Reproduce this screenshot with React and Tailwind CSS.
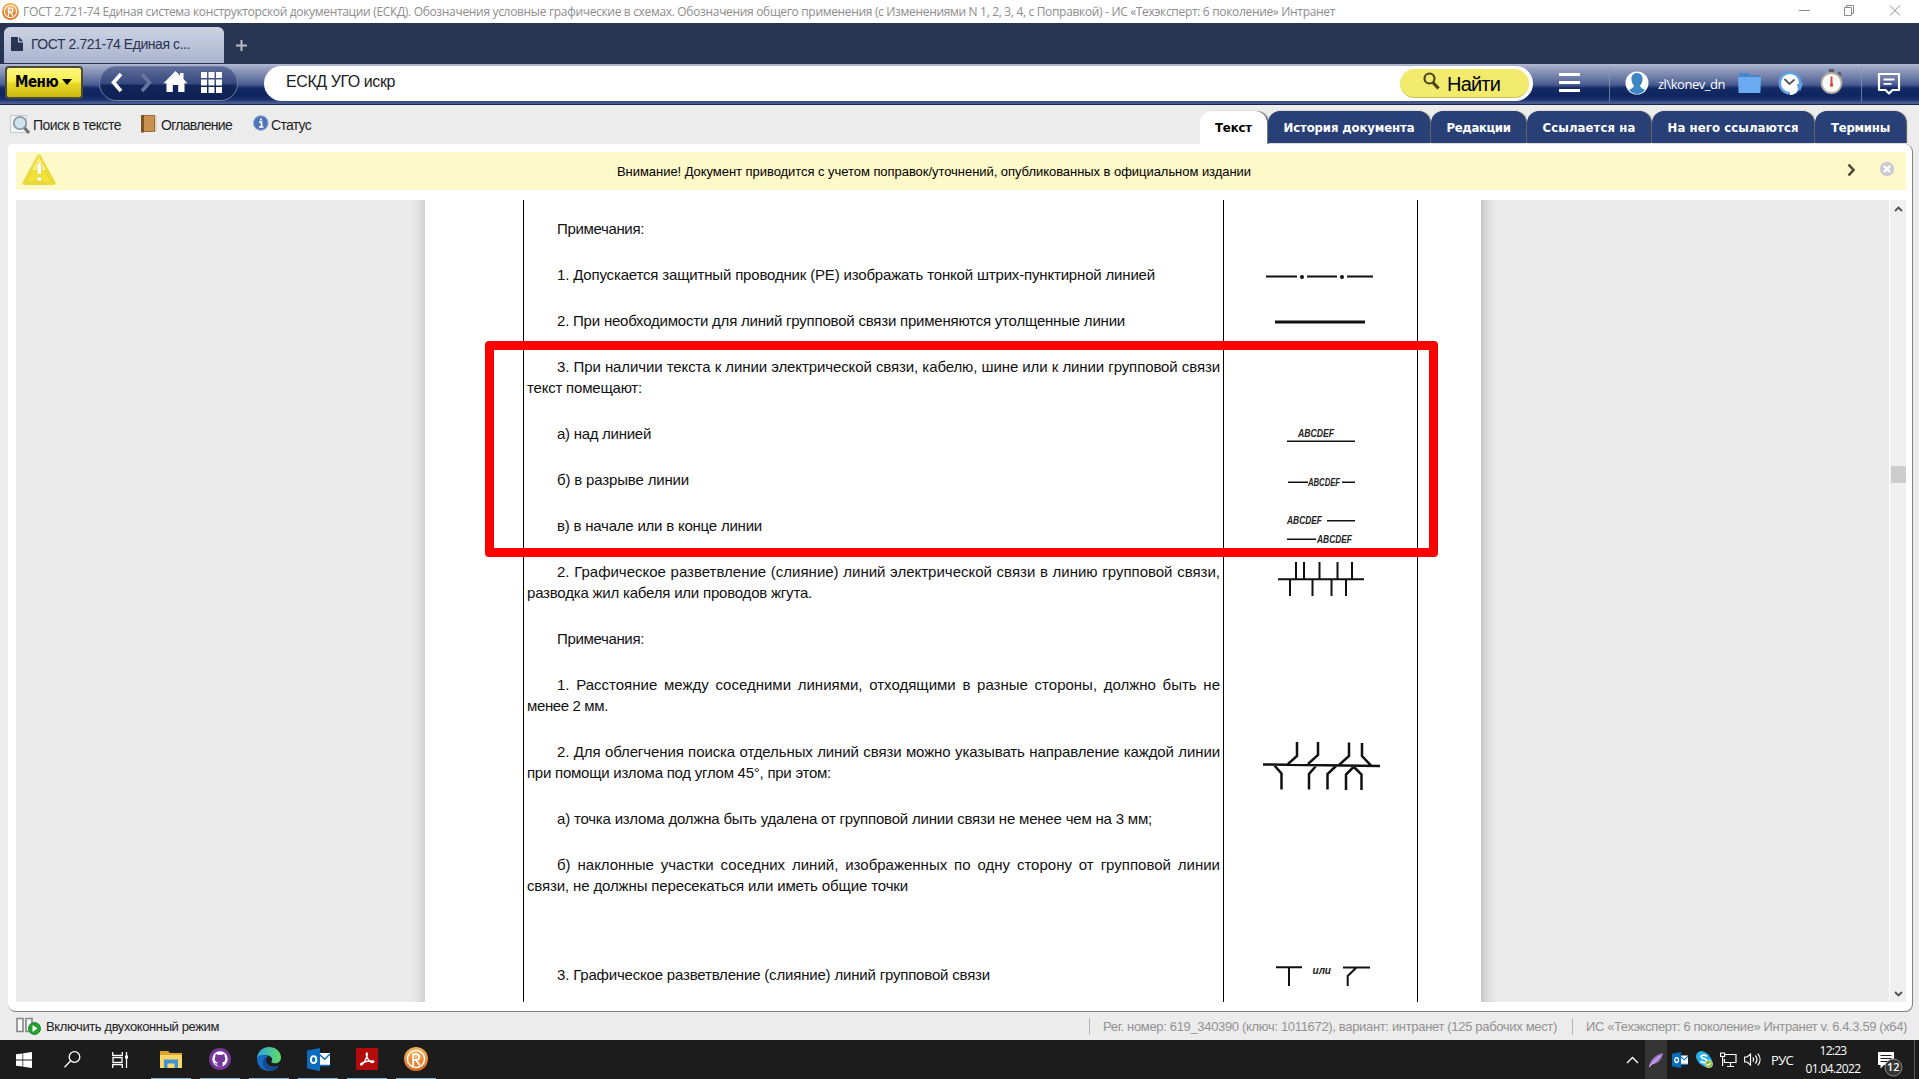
import { useLayoutEffect, useRef, useState } from "react";

const ARIAL = "font-['Liberation_Sans',Arial,sans-serif]";
const SEGOE = "font-['Open_Sans','Noto_Sans',sans-serif]";

// Single line of text whose tracking is adjusted so that it fills the given width.
function Fit({ w, children, className = "" }) {
  const ref = useRef(null);
  const [ls, setLs] = useState(0);
  useLayoutEffect(() => {
    const measure = () => {
      const el = ref.current;
      if (!el) return;
      el.style.letterSpacing = "0px";
      const n = el.getBoundingClientRect().width;
      const v = (w - n) / children.length;
      el.style.letterSpacing = v + "px";
      setLs(v);
    };
    measure();
    if (document.fonts) document.fonts.ready.then(measure);
  }, [w, children]);
  return (
    <span ref={ref} className={"inline-block shrink-0 whitespace-nowrap indent-0 " + className} style={{ letterSpacing: ls + "px" }}>
      {children}
    </span>
  );
}

function TechLogo({ size }) {
  return (
    <svg width={size} height={size} viewBox="0 0 24 24" className="shrink-0">
      <defs>
        <linearGradient id="tl" x1="0" y1="0" x2="0" y2="1">
          <stop offset="0" stopColor="#f6b45a" />
          <stop offset="1" stopColor="#dd6a1c" />
        </linearGradient>
      </defs>
      <circle cx="12" cy="12" r="12" fill="url(#tl)" />
      <circle cx="12" cy="12" r="8.6" fill="none" stroke="#fff" strokeWidth="1.5" />
      <path d="M9.2 19V7.2h3.2a2.9 2.9 0 0 1 0 5.8H9.2M12.2 13l3.4 5.2M12 9.5v1.2" fill="none" stroke="#fff" strokeWidth="1.9" />
    </svg>
  );
}

function OutlookIcon({ w, h }) {
  return (
    <svg width={w} height={h} viewBox="0 0 23 23" className="shrink-0">
      <path d="M12 5h11v13H12z" fill="#fff" />
      <path d="M12.5 6.5l5.2 4.8L23 6M13 17.5h10" fill="none" stroke="#0a6cbd" strokeWidth="1.5" />
      <path d="M0 2.5L13 0v23L0 20.500z" fill="#0a6cbd" />
      <ellipse cx="6.600" cy="11.600" rx="2.700" ry="3.500" fill="none" stroke="#fff" strokeWidth="1.900" />
    </svg>
  );
}

function TitleBar() {
  return (
    <div className="flex h-[23px] items-center bg-white pl-[2px]">
      <div className="-mt-px flex"><TechLogo size={17} /></div>
      <Fit w={1312} className={"ml-[4px] text-[12px] leading-4 text-[#8d8d8d] " + SEGOE}>
        ГОСТ 2.721-74 Единая система конструкторской документации (ЕСКД). Обозначения условные графические в схемах. Обозначения общего применения (с Изменениями N 1, 2, 3, 4, с Поправкой) - ИС «Техэксперт: 6 поколение» Интранет
      </Fit>
      <svg width="110" height="22" viewBox="1795 0 110 22" className="-mt-px ml-auto mr-[14px]" fill="none" stroke="#8a8a8a">
        <path d="M1799 10.500h11M1844.500 7.500h7v8h-7zM1846.500 7.500v-2h7v8h-2M1890 5.500l10 10M1900 5.500l-10 10" />
      </svg>
    </div>
  );
}

function TabStrip() {
  return (
    <div className="flex h-[41px] bg-[#273452] pl-1 pt-1">
      <div className="flex h-9 w-[220px] items-center rounded-t-md bg-linear-to-b from-[#cdd3e2] to-[#a9b4cf] pb-[2px] pl-[7px]">
        <svg width="12" height="14" viewBox="0 0 12 14"><path d="M0 0h7v5.500h5V14H0zM8.200 0L12 4.300H8.200z" fill="#273452" /></svg>
        <Fit w={159} className={"ml-[8px] text-[14px] leading-5 text-[#2a3350] " + ARIAL}>ГОСТ 2.721-74 Единая с...</Fit>
      </div>
      <svg width="11" height="11" viewBox="0 0 11 11" className="ml-[12px] mt-[13px]"><path d="M5.500 0v11M0 5.500h11" stroke="#b9bdc9" strokeWidth="2" /></svg>
    </div>
  );
}

function Toolbar() {
  return (
    <div className="flex h-[41px] items-start border-b border-[#1a2547] bg-[linear-gradient(to_bottom,#b3bbd2_0,#9ea8c6_3px,#5d6d9c_17px,#465891_21px,#152b65_24px,#0f2560_31px,#1b3270_36px,#41548a_38px,#4d5f92_40px)] pt-[2px]">
      <div className="ml-[5px] flex h-[33px] w-[78px] items-center rounded-[4px] border-2 border-[#4d4a36] bg-[linear-gradient(to_bottom,#fbf685_0,#f6ee4c_45%,#e6d727_55%,#cdb90f_100%)] pl-[8px] pb-[2px]">
        <Fit w={43} className="font-['DejaVu_Sans_Condensed','DejaVu_Sans','Open_Sans',sans-serif] text-[15px] font-bold leading-5 text-black">Меню</Fit>
        <svg width="10" height="6" viewBox="0 0 10 6" className="ml-[4px] mt-px"><path d="M0 0h10L5 6z" /></svg>
      </div>
      <div className="ml-[16px] flex h-[35px] w-[139px] items-center rounded-full border border-[#6f7da8] bg-[linear-gradient(to_bottom,#5e6c97_0,#364a80_50%,#12265b_56%,#0e2053_100%)]">
        <svg width="137" height="33" viewBox="100 67 137 33">
          <path d="M121 74l-7.500 8.500 7.500 8.500" fill="none" stroke="#fff" strokeWidth="3.600" />
          <path d="M142 74l7.500 8.500-7.500 8.500" fill="none" stroke="#66749e" strokeWidth="3.600" />
          <path d="M175.500 71l4.500 4.600V73h3.500v6l4 4.300h-3V92h-6.300v-7h-5.400v7h-6.300v-8.700h-3z" fill="#fff" />
          <path d="M201 72h6v6h-6zM208.500 72h6v6h-6zM216 72h6v6h-6zM201 79.500h6v6h-6zM208.500 79.500h6v6h-6zM216 79.500h6v6h-6zM201 87h6v6h-6zM208.500 87h6v6h-6zM216 87h6v6h-6z" fill="#fff" />
        </svg>
      </div>
      <div className="ml-[26px] flex h-[35px] w-[1269px] items-center rounded-full bg-white pl-[22px] pr-[4px]">
        <Fit w={109} className={"-mt-[3px] text-[16px] leading-5 text-[#1c1c1c] " + ARIAL}>ЕСКД УГО искр</Fit>
        <div className="ml-auto flex h-[29px] w-[129px] items-center rounded-full border-b border-[#cbc453] bg-[#f1ea6c] pl-[23px]">
          <svg width="17" height="18" viewBox="0 0 17 18" className="-mt-1"><circle cx="6.500" cy="6.500" r="5" fill="none" stroke="#4a4520" strokeWidth="2.200" /><path d="M10 10.500l5.500 6" stroke="#4a4520" strokeWidth="3.200" /></svg>
          <Fit w={53} className={"ml-[7px] mt-[2px] text-[20px] leading-6 text-black " + ARIAL}>Найти</Fit>
        </div>
      </div>
      <svg width="21" height="20" viewBox="0 0 21 20" className="ml-[26px] mt-[7px]"><path d="M0 1.500h21M0 9.500h21M0 17.500h21" stroke="#fff" strokeWidth="3" /></svg>
      <div className="-mt-[1px] ml-[29px] h-[37px] w-px bg-[#8b97b9]/70" />
      <svg width="24" height="24" viewBox="0 0 24 24" className="ml-[15px] mt-[5px]">
        <circle cx="12" cy="12" r="11.500" fill="#fff" />
        <path d="M12 2c4 0 6 3 5.500 7-.4 3-1.500 4.500-2.500 5.500 0 2 2.500 3 5 4.500-2 2.600-5 4-8 4s-6-1.400-8-4c2.500-1.500 5-2.500 5-4.500-1-1-2.100-2.500-2.500-5.500C6 5 8 2 12 2z" fill="#3c86c4" />
      </svg>
      <Fit w={67} className={"ml-[9px] mt-[8px] text-[13px] leading-5 text-white " + SEGOE}>{"zl\\konev_dn"}</Fit>
      <svg width="24" height="22" viewBox="0 0 24 22" className="ml-[13px] mt-[6px]"><path d="M1 1h9l2 2.500h10V21H1z" fill="#4287cf" /><path d="M0 5h23l-.6 16H.6z" fill="#6aaaf0" /></svg>
      <svg width="26" height="24" viewBox="0 0 26 24" className="ml-[16px] mt-[5px]">
        <circle cx="12" cy="12" r="10.300" fill="#fff" stroke="#5d9fe3" strokeWidth="2.500" />
        <path d="M18.500 13.500l7-2-3.500 9z" fill="#5d9fe3" />
        <path d="M12 22.500a10.500 10.500 0 0 0 5-1.500l2-4" fill="none" stroke="#fff" strokeWidth="3" />
        <path d="M6.500 8l5 5 5-4.500" fill="none" stroke="#555" strokeWidth="1.800" />
      </svg>
      <svg width="24" height="26" viewBox="0 0 24 26" className="ml-[16px] mt-[3px]">
        <path d="M9 0h5v4H9zM17 4l3-1.500L22 6l-3 1z" fill="#5c5c66" />
        <circle cx="11.500" cy="14" r="10" fill="#fdfcf8" stroke="#b3aaa4" strokeWidth="1.800" />
        <path d="M11.500 7.500v10" stroke="#d94a45" strokeWidth="2" /><path d="M10 14.500h3v3h-3z" fill="#d94a45" />
      </svg>
      <div className="-mt-[1px] ml-[17px] h-[37px] w-px bg-[#8b97b9]/70" />
      <svg width="24" height="24" viewBox="0 0 24 24" className="ml-[15px] mt-[6px]" fill="none" stroke="#fff" strokeWidth="2.200">
        <path d="M2 2h20v16h-6.500L12 21.500 8.500 18H2z" strokeLinejoin="round" /><path d="M6.500 7.500h11M6.500 11.800h8" strokeWidth="1.800" />
      </svg>
    </div>
  );
}

const DOC_TABS = [
  { t: "История документа", w: 131, c: "w-[162px]" },
  { t: "Редакции", w: 64, c: "w-[95px]" },
  { t: "Ссылается на", w: 93, c: "w-[124px]" },
  { t: "На него ссылаются", w: 131, c: "w-[162px]" },
  { t: "Термины", w: 59, c: "w-[91px]" },
];
const TAB_FONT = "text-[13px] font-bold leading-5 font-['DejaVu_Sans_Condensed','DejaVu_Sans','Open_Sans',sans-serif]";

function SubBar() {
  const label = "text-[14px] leading-5 text-[#1c1c1c] " + ARIAL;
  return (
    <div className="flex h-[39px] items-start bg-[#ececec] pl-[10px]">
      <svg width="21" height="20" viewBox="0 0 21 20" className="mt-[10px]">
        <path d="M.5.500h16v17H.5z" fill="#f4f6f7" stroke="#c2cacd" />
        <circle cx="10" cy="8" r="6.200" fill="#cfe4ef" stroke="#8b9ba4" strokeWidth="1.800" /><path d="M14.500 13l4.500 5" stroke="#6d6d70" strokeWidth="3" />
      </svg>
      <Fit w={88} className={"ml-[2px] mt-[10px] " + label}>Поиск в тексте</Fit>
      <svg width="16" height="18" viewBox="0 0 16 18" className="ml-[20px] mt-[10px]">
        <path d="M12 1h3v15h-3z" fill="#f2ead8" stroke="#b3aa98" strokeWidth=".6" /><path d="M.5.500h13v16H.5z" fill="#c8914f" stroke="#9a6a35" /><path d="M0 0h3v17.500H0z" fill="#7c5228" />
      </svg>
      <Fit w={71} className={"ml-[4px] mt-[10px] " + label}>Оглавление</Fit>
      <svg width="16" height="17" viewBox="0 0 16 17" className="ml-[21px] mt-[10px]">
        <circle cx="7.800" cy="8" r="7.300" fill="#4f74b8" stroke="#8fa6d2" /><path d="M6 7h2.500v5M6 12h4.500M8 3.500v2" fill="none" stroke="#fff" strokeWidth="1.700" />
      </svg>
      <Fit w={40} className={"ml-[2px] mt-[10px] " + label}>Статус</Fit>
      <div className="ml-auto mr-[13px] mt-[6px] flex h-[33px] gap-px">
        <div className="flex w-[67px] justify-center rounded-t-[12px] bg-white pt-[7px] shadow-[2px_0_1px_#777]">
          <Fit w={37} className={"text-black " + TAB_FONT}>Текст</Fit>
        </div>
        {DOC_TABS.map((d) => (
          <div key={d.t} className={"flex h-8 justify-center rounded-t-[12px] bg-[#294076] pt-[7px] text-white shadow-[1px_0_1px_#5c5650] " + d.c}>
            <Fit w={d.w} className={TAB_FONT}>{d.t}</Fit>
          </div>
        ))}
      </div>
    </div>
  );
}

function Warning() {
  return (
    <div className="flex h-[38px] items-start bg-[#fef9c8] pl-[6px]">
      <svg width="34" height="34" viewBox="0 0 34 34" className="mt-px">
        <path d="M17 3.500L31.500 30H2.500z" fill="#f3e335" stroke="#e9d93a" strokeWidth="4" strokeLinejoin="round" />
        <path d="M17 3.500L24 17H10z" fill="#f9ef7c" />
        <path d="M15 10h4.500v11H15zM15 24h4.500v4H15z" fill="#fff" stroke="#d9ca34" strokeWidth=".6" />
      </svg>
      <Fit w={634} className={"ml-[561px] mt-[10px] text-[13px] leading-5 text-black " + ARIAL}>
        Внимание! Документ приводится с учетом поправок/уточнений, опубликованных в официальном издании
      </Fit>
      <svg width="9" height="14" viewBox="0 0 9 14" className="ml-auto mt-[11px]"><path d="M1.500 1.500l5 5.500-5 5.500" fill="none" stroke="#4a4638" strokeWidth="2.600" /></svg>
      <svg width="16" height="16" viewBox="0 0 16 16" className="ml-[23px] mr-[11px] mt-[9px]"><circle cx="8" cy="8" r="7.200" fill="#cbccd3" /><path d="M5 5l6 6M11 5l-6 6" stroke="#fff" strokeWidth="2.400" /></svg>
    </div>
  );
}

const LBL = "font-['Liberation_Sans',Arial,sans-serif] text-[10px] font-bold italic";
const txt = { fill: "#222", stroke: "none" };

// Rows of the table: text lines, the width of each line, and the symbol in the right column.
const ROWS = [
  { y: 218, h: 46, c: "h-[46px]", lines: [["Примечания:", 87]] },
  {
    y: 264, h: 46, c: "h-[46px]", lines: [["1. Допускается защитный проводник (РЕ) изображать тонкой штрих-пунктирной линией", 598]],
    fig: <><path d="M1266 276.500h31M1307 276.500h30M1347 276.500h26" /><circle cx="1302" cy="277" r="2" fill="#111" stroke="none" /><circle cx="1342" cy="277" r="2" fill="#111" stroke="none" /></>,
  },
  {
    y: 310, h: 46, c: "h-[46px]", lines: [["2. При необходимости для линий групповой связи применяются утолщенные линии", 568]],
    fig: <path d="M1275 322h90" strokeWidth="3" />,
  },
  { y: 356, h: 67, c: "h-[67px]", tight: true, lines: [["3. При наличии текста к линии электрической связи, кабелю, шине или к линии групповой связи", 663], ["текст помещают:", 115]] },
  {
    y: 423, h: 46, c: "h-[46px]", lines: [["а) над линией", 94]],
    fig: <><text x="1298" y="437" textLength="36" lengthAdjust="spacingAndGlyphs" className={LBL} {...txt}>ABCDEF</text><path d="M1287 441.200h68" strokeWidth="1.500" /></>,
  },
  {
    y: 469, h: 46, c: "h-[46px]", lines: [["б) в разрыве линии", 132]],
    fig: <><path d="M1288 482.300h20M1342 482.300h13" strokeWidth="1.500" /><text x="1308" y="485.500" textLength="32" lengthAdjust="spacingAndGlyphs" className={LBL} {...txt}>ABCDEF</text></>,
  },
  {
    y: 515, h: 46, c: "h-[46px]", lines: [["в) в начале или в конце линии", 205]],
    fig: <><text x="1287" y="524" textLength="35" lengthAdjust="spacingAndGlyphs" className={LBL} {...txt}>ABCDEF</text><path d="M1327 520.700h28M1287 539.300h29" strokeWidth="1.500" /><text x="1317" y="542.500" textLength="35" lengthAdjust="spacingAndGlyphs" className={LBL} {...txt}>ABCDEF</text></>,
  },
  {
    y: 561, h: 67, c: "h-[67px]", lines: [["2. Графическое разветвление (слияние) линий электрической связи в линию групповой связи,", 663], ["разводка жил кабеля или проводов жгута.", 285]],
    fig: <path d="M1278 579.300h86M1296 562v17M1304 562v17M1319.500 562v17M1337.500 562v17M1352 562v17M1290 579v17M1312.500 579v17M1331.500 579v17M1346 579v17" />,
  },
  { y: 628, h: 46, c: "h-[46px]", lines: [["Примечания:", 87]] },
  { y: 674, h: 67, c: "h-[67px]", lines: [["1. Расстояние между соседними линиями, отходящими в разные стороны, должно быть не", 663], ["менее 2 мм.", 81]] },
  {
    y: 741, h: 67, c: "h-[67px]", tight: true, lines: [["2. Для облегчения поиска отдельных линий связи можно указывать направление каждой линии", 663], ["при помощи излома под углом 45°, при этом:", 304]],
    fig: <path d="M1263 764.500L1380 766M1297 742v14l-9 8M1318 742v13l-10 9M1349 742.500v13.500l-10 9M1362 743v13l9 9.500M1274 765l7.500 8.500V789.500M1316 766l-7 8v15.500M1336 766l-8.500 8v15.500M1353.500 767l-7.500 7.500v15.500M1354 767l7.500 7.500v15.500" strokeWidth="2.500" />,
  },
  { y: 808, h: 46, c: "h-[46px]", lines: [["а) точка излома должна быть удалена от групповой линии связи не менее чем на 3 мм;", 595]] },
  { y: 854, h: 110, c: "h-[110px]", lines: [["б) наклонные участки соседних линий, изображенных по одну сторону от групповой линии", 663], ["связи, не должны пересекаться или иметь общие точки", 381]] },
  {
    y: 964, h: 38, c: "h-[38px]", lines: [["3. Графическое разветвление (слияние) линий групповой связи", 433]],
    fig: <><path d="M1276 967.200h26M1289 967v19M1343 967.500h27M1356 968l-8.300 8v10" /><text x="1312.500" y="973.500" textLength="18.500" lengthAdjust="spacingAndGlyphs" className={LBL} {...txt}>или</text></>,
  },
];

function Row({ row }) {
  const justified = row.lines[0][1] === 663;
  const tail = row.lines[1];
  return (
    <div className={"grid grid-cols-[700px_193px] " + row.c}>
      <div className={"border-r border-black px-[3px] text-[15px] leading-[21px] text-[#111] " + ARIAL}>
        {justified ? (
          <div className={"w-[693px] whitespace-nowrap pl-[30px] [text-align-last:justify] " + (row.tight ? "tracking-[-0.1px]" : "tracking-normal")}>{row.lines[0][0]}</div>
        ) : (
          <div className="flex pl-[30px]"><Fit w={row.lines[0][1]}>{row.lines[0][0]}</Fit></div>
        )}
        {tail && <div className="flex"><Fit w={tail[1]}>{tail[0]}</Fit></div>}
      </div>
      <svg width="193" height={row.h} viewBox={`1224 ${row.y} 193 ${row.h}`} fill="none" stroke="#111" strokeWidth="2" className="overflow-visible">{row.fig}</svg>
    </div>
  );
}

function Document() {
  return (
    <div className="mt-[10px] flex h-[802px] overflow-hidden bg-[#ebebeb]">
      <div className="w-[409px] bg-[linear-gradient(to_left,#cfcfcf_0,#e0e0e0_6px,#ebebeb_14px)]" />
      <div className="relative w-[1056px] bg-white pl-[98px]">
        <div className="h-[802px] w-[895px] border-x border-black">
          <div className="h-[18px] w-[700px] border-r border-black" />
          {ROWS.map((r) => <Row key={r.y} row={r} />)}
        </div>
        <div className="absolute left-[60px] top-[141px] h-[216px] w-[953px] rounded-[4px] border-[9px] border-[#fe0000]" />
      </div>
      <div className="flex-1 bg-[linear-gradient(to_right,#c6c6c6_0,#dcdcdc_7px,#ebebeb_16px)]" />
      <div className="flex w-[17px] flex-col items-center border-l border-white bg-[#f0f0f0]">
        <svg width="9" height="6" viewBox="0 0 9 6" className="mt-[6px]"><path d="M1 5l3.500-3.500L8 5" fill="none" stroke="#505050" strokeWidth="1.800" /></svg>
        <div className="mt-[254px] h-[17px] w-[15px] bg-[#cdcdcd]" />
        <svg width="9" height="6" viewBox="0 0 9 6" className="mb-[5px] mt-auto"><path d="M1 1l3.500 3.500L8 1" fill="none" stroke="#505050" strokeWidth="1.800" /></svg>
      </div>
    </div>
  );
}

function StatusBar() {
  const label = "mt-px text-[13px] leading-5 " + ARIAL;
  return (
    <div className="flex h-[28px] items-center bg-[#ececec] pl-[16px] pr-[12px]">
      <svg width="25" height="18" viewBox="0 0 25 18">
        <path d="M1 1.500h6v13H1zM10 1.500h6v13h-6z" fill="#f7f7f7" stroke="#858585" strokeWidth="1.600" />
        <circle cx="18.500" cy="11.500" r="6" fill="#21a22c" stroke="#0d7a17" strokeWidth=".8" /><path d="M16.500 8l5 3.500-5 3.500z" fill="#fff" />
      </svg>
      <Fit w={173} className={"ml-[5px] text-[#222] " + label}>Включить двухоконный режим</Fit>
      <div className="ml-auto h-[17px] w-px bg-[#b5b5b5]" />
      <Fit w={454} className={"ml-[13px] text-[#929292] " + label}>Рег. номер: 619_340390 (ключ: 1011672), вариант: интранет (125 рабочих мест)</Fit>
      <div className="ml-[15px] h-[17px] w-px bg-[#b5b5b5]" />
      <Fit w={321} className={"ml-[13px] text-[#929292] " + label}>ИС «Техэксперт: 6 поколение» Интранет v. 6.4.3.59 (x64)</Fit>
    </div>
  );
}

function TaskApp({ children }) {
  return <div className="flex h-[39px] w-10 items-center justify-center border-b border-[#76b9ed]">{children}</div>;
}

function Taskbar() {
  return (
    <div className="flex h-[39px] items-center bg-[#1c1c1c] pl-[16px]">
      <svg width="16" height="16" viewBox="0 0 16 16"><path d="M0 2.300l6.500-.9v6.200H0zM7.200 1.300L16 0v7.600H7.200zM0 8.400h6.500v6.200L0 13.700zM7.200 8.400H16V16l-8.800-1.300z" fill="#fff" /></svg>
      <svg width="17" height="17" viewBox="0 0 17 17" className="ml-[32px]" fill="none" stroke="#fff" strokeWidth="1.300"><circle cx="10.500" cy="6" r="5.300" /><path d="M6.700 9.800L.5 16.200" /></svg>
      <svg width="17" height="16" viewBox="0 0 17 16" className="ml-[31px]" fill="none" stroke="#fff" strokeWidth="1.300">
        <path d="M.7 0v3.300h9.600V0M.7 16v-3.300h9.600V16M1 5.500h9v5H1zM14.500 0v16" /><path d="M13 3.500h3v3h-3z" fill="#fff" stroke="none" />
      </svg>
      <div className="ml-[22px] flex gap-[9px]">
        <TaskApp>
          <svg width="22" height="19" viewBox="0 0 22 19"><path d="M0 1h8l2 2h12v15H0z" fill="#dca32d" /><path d="M0 5h22v13H0z" fill="#fbd668" /><path d="M4 9.500h14V18h-3.500v-4.500h-7V18H4z" fill="#3e94d4" /></svg>
        </TaskApp>
        <TaskApp>
          <svg width="22" height="22" viewBox="0 0 22 22"><circle cx="11" cy="11" r="11" fill="#76379a" /><circle cx="11" cy="11" r="7.700" fill="#fff" />
            <path d="M6.800 5.800l2.400 1.200c1.200-.3 2.400-.3 3.600 0l2.400-1.200c.5 1 .5 1.800.3 2.500 1 1.200.9 2.800.5 4-.5 1.400-1.600 1.900-2.800 2.100.5.600.4 1.600.4 4-1.700.5-3.600.5-5.200 0v-1.800c-1.400.2-2.100-.4-2.600-1.500 1 .1 1.400.7 2.600.4.1-.5.200-.8.400-1.100-1.200-.2-2.300-.7-2.800-2.100-.4-1.200-.5-2.800.5-4-.2-.700-.2-1.500.3-2.500z" fill="#76379a" /></svg>
        </TaskApp>
        <TaskApp>
          <svg width="24" height="24" viewBox="0 0 24 24">
            <defs><linearGradient id="eg" x1="0" x2="1"><stop offset="0" stopColor="#2ba4e0" /><stop offset="1" stopColor="#62dc63" /></linearGradient></defs>
            <path d="M0 12C0 5 5 0 12 0s12 5 12 10.500c0 3.500-2.500 5.800-6 5.800-3 0-4-1-3.500-2 1-1.500.8-3-.5-4.300C11 7 3 7 0 12z" fill="url(#eg)" />
            <path d="M0 12c0 7 5 12 12 12 4 0 7.500-2 9.500-4.500.3-.5 0-.8-.5-.6-5.500 2.300-12-.4-12-5.900 0-1.800 1-3.200 2.500-4C6 6.500 0 8.500 0 12z" fill="#1769bd" />
            <path d="M9 13c0 5.500 6.500 8.200 12 5.900-2 2.900-5 4.600-8 4.900-4.500-1-8-5-7-9.500C6.500 11 9 9.300 11.500 9 10 9.800 9 11.200 9 13z" fill="#134b93" />
          </svg>
        </TaskApp>
        <TaskApp><OutlookIcon w={23} h={23} /></TaskApp>
        <TaskApp>
          <svg width="22" height="22" viewBox="0 0 22 22"><path d="M0 0h22v22H0z" fill="#b30b0b" /><path d="M5 17c-2-1.500 4-4 11.500-4 3 .5.500 2.500-2 1C11 11 9.500 6 10.500 5c1.500-.5 1 4-2.500 9.500-1 1.500-2 2.600-3 2.500z" fill="none" stroke="#fff" strokeWidth="1.300" /></svg>
        </TaskApp>
        <TaskApp><TechLogo size={24} /></TaskApp>
      </div>
      <svg width="13" height="8" viewBox="0 0 13 8" className="ml-auto"><path d="M1 7l5.500-5.500L12 7" fill="none" stroke="#fff" strokeWidth="1.400" /></svg>
      <div className="ml-[6px] flex h-[39px] w-[22px] items-center justify-center bg-[#353535]">
        <svg width="16" height="16" viewBox="0 0 16 16"><path d="M1 15C2 8 7 3 15 1c-1 6-5 11-11 11.500z" fill="#a77bd0" /><path d="M1 15L12 4" stroke="#e6d6f4" strokeWidth=".9" /></svg>
      </div>
      <div className="ml-[5px] flex"><OutlookIcon w={16} h={16} /></div>
      <svg width="17" height="17" viewBox="0 0 17 17" className="ml-[8px]">
        <circle cx="5.500" cy="5.500" r="5.500" fill="#25b1ea" /><circle cx="10" cy="10" r="5.800" fill="#25b1ea" /><circle cx="7.700" cy="7.800" r="6.300" fill="#25b1ea" />
        <path d="M10.800 5.500C9.500 3.600 5 3.700 5 5.800s5.800 1.600 5.800 4c0 2.200-4.800 2.400-6 .2" fill="none" stroke="#fff" strokeWidth="1.700" />
        <circle cx="12.800" cy="13" r="3.800" fill="#7fba2a" stroke="#fff" strokeWidth=".6" /><path d="M11 13l1.400 1.400 2.400-2.600" fill="none" stroke="#fff" strokeWidth="1.100" />
      </svg>
      <svg width="17" height="16" viewBox="0 0 17 16" className="ml-[7px]" fill="none" stroke="#fff" strokeWidth="1.200"><path d="M5 2.500h11v8H4.500V7M7 14.500h7M10.500 10.500v4M.6 1h4v3.500h-4zM2.600 4.500V14" /></svg>
      <svg width="17" height="15" viewBox="0 0 17 15" className="ml-[7px]" fill="none" stroke="#fff" strokeWidth="1.200"><path d="M.6 5h2.500L6.500 2v11L3.100 10H.6zM8.800 5.300c1 1.300 1 3 0 4.400M11.300 3.500c2 2.400 2 5.600 0 8M13.800 1.700c3 3.500 3 8.100 0 11.600" /></svg>
      <Fit w={22} className={"ml-[10px] text-[13px] leading-4 text-white " + SEGOE}>РУС</Fit>
      <div className={"ml-[12px] flex w-[56px] flex-col items-center text-[12px] leading-[18px] text-white " + SEGOE}>
        <Fit w={27}>12:23</Fit>
        <Fit w={55}>01.04.2022</Fit>
      </div>
      <div className="relative ml-[17px] h-[39px] w-[24px]">
        <svg width="26" height="39" viewBox="1879 1040 26 39"><path d="M1879 1052h16v13h-10l-3.500 3.500V1065h-2.500z" fill="#fff" /><path d="M1881.500 1055.500h11M1881.500 1058.500h11M1881.500 1061.500h7" stroke="#1c1c1c" /><circle cx="1894.500" cy="1067.500" r="8.500" fill="#353535" stroke="#8c8c8c" /></svg>
        <span className={"absolute left-[9px] top-[19px] text-[11px] font-semibold leading-4 text-white " + SEGOE}>12</span>
      </div>
      <div className="ml-[12px] h-[39px] w-px bg-[#5a5a5a]" />
      <div className="w-[4px]" />
    </div>
  );
}

export default function App() {
  return (
    <div className="flex h-[1079px] w-[1919px] flex-col overflow-hidden bg-[#ececec]">
      <TitleBar />
      <TabStrip />
      <Toolbar />
      <SubBar />
      <div className="ml-[8px] h-[868px] w-[1905px] rounded-[8px] rounded-tl-[4px] border-b border-r border-[#808080] bg-white pl-[8px] pr-[6px] pt-[8px]">
        <Warning />
        <Document />
      </div>
      <StatusBar />
      <Taskbar />
    </div>
  );
}
